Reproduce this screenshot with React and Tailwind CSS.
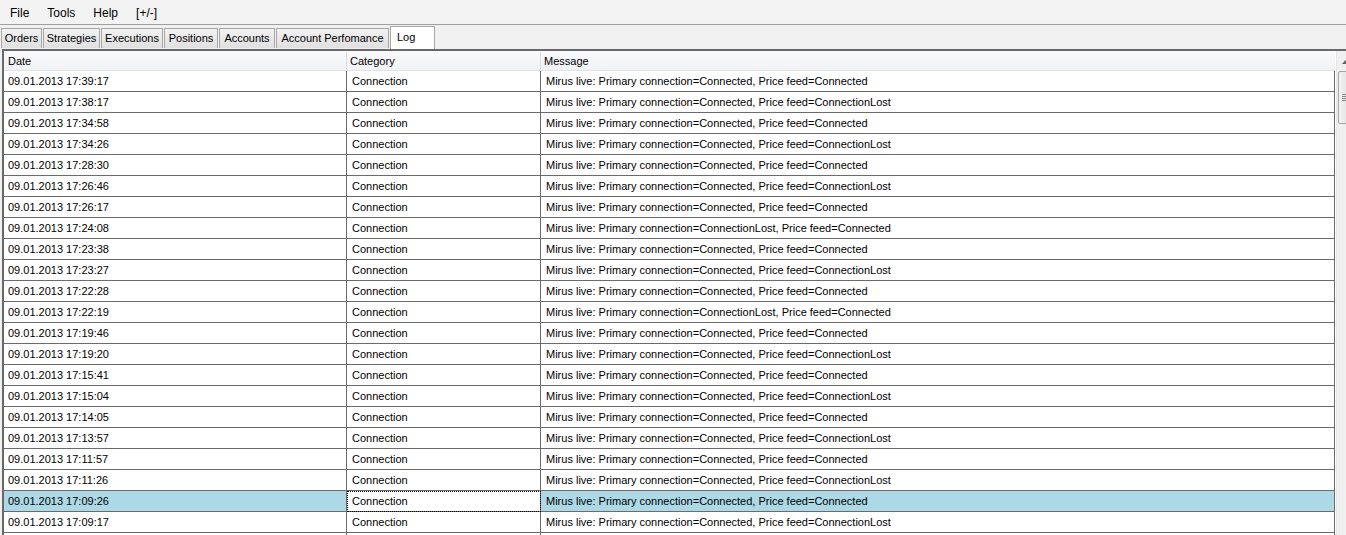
import React from "react";

const C = "Mirus live: Primary connection=Connected, Price feed=Connected";
const L = "Mirus live: Primary connection=Connected, Price feed=ConnectionLost";
const P = "Mirus live: Primary connection=ConnectionLost, Price feed=Connected";

const rows = [
  ["09.01.2013 17:39:17", C],
  ["09.01.2013 17:38:17", L],
  ["09.01.2013 17:34:58", C],
  ["09.01.2013 17:34:26", L],
  ["09.01.2013 17:28:30", C],
  ["09.01.2013 17:26:46", L],
  ["09.01.2013 17:26:17", C],
  ["09.01.2013 17:24:08", P],
  ["09.01.2013 17:23:38", C],
  ["09.01.2013 17:23:27", L],
  ["09.01.2013 17:22:28", C],
  ["09.01.2013 17:22:19", P],
  ["09.01.2013 17:19:46", C],
  ["09.01.2013 17:19:20", L],
  ["09.01.2013 17:15:41", C],
  ["09.01.2013 17:15:04", L],
  ["09.01.2013 17:14:05", C],
  ["09.01.2013 17:13:57", L],
  ["09.01.2013 17:11:57", C],
  ["09.01.2013 17:11:26", L],
  ["09.01.2013 17:09:26", C],
  ["09.01.2013 17:09:17", L],
  ["", ""],
];

const tabs = [
  ["Orders", "w-[41px]"],
  ["Strategies", "w-[57px]"],
  ["Executions", "w-[62px]"],
  ["Positions", "w-[54px]"],
  ["Accounts", "w-[56px]"],
  ["Account Perfomance", "w-[113px]"],
];

export default function App() {
  return (
    <div className="w-[1346px] h-[535px] overflow-hidden bg-[#f0f0f0] font-['Liberation_Sans',Arial,sans-serif] text-black">
      {/* Menu bar */}
      <div className="h-[25px] flex items-center pl-px pt-px text-[12px] bg-[#f3f3f3] border-b border-[#a0a0a0]">
        <span className="px-[9px]">File</span>
        <span className="px-[9px]">Tools</span>
        <span className="px-[9px]">Help</span>
        <span className="px-[9px]">[+/-]</span>
      </div>

      {/* Tab strip */}
      <div className="h-[24px] flex items-end pl-px gap-px text-[11px]">
        {tabs.map(([t, w]) => (
          <div
            key={t}
            className={`${w} h-[20px] mb-px flex items-center justify-center border border-[#a7a7a7] border-b-0 bg-gradient-to-b from-[#f2f2f2] to-[#e0e0e0] whitespace-nowrap`}
          >
            {t}
          </div>
        ))}
        <div className="w-[45px] h-[23px] flex items-center pl-[6px] pb-[2px] bg-white border border-[#a7a7a7] border-b-0">
          Log
        </div>
      </div>

      {/* Grid */}
      <div className="ml-[2px] border-t-2 border-l-2 border-[#696969] bg-white flex h-[486px] overflow-hidden text-[11px]">
        <div className="flex flex-col shrink-0">
          {/* Header */}
          <div className="flex h-[20px] shrink-0 pt-px bg-gradient-to-b from-[#f9fafb] to-[#f0f2f5] border-b border-[#e3e3e3]">
            <div className="w-[343px] pl-[4px] flex items-center border-r border-[#dcdcdc]">Date</div>
            <div className="w-[194px] pl-[3px] flex items-center border-r border-[#dcdcdc]">Category</div>
            <div className="w-[794px] pl-[3px] flex items-center">Message</div>
          </div>
          {/* Rows */}
          {rows.map(([d, m], i) => {
            const sel = i === 20;
            const empty = d === "";
            return (
              <div key={i} className="flex h-[21px] shrink-0">
                <div
                  className={`w-[343px] pl-[4px] flex items-center border-r border-b border-[#6b6b6b] ${sel ? "bg-[#add8e6]" : ""}`}
                >
                  {d}
                </div>
                <div
                  className={`w-[194px] pl-[5px] flex items-center border-r border-b border-[#6b6b6b] ${sel ? "outline outline-1 outline-dotted outline-black -outline-offset-1" : ""}`}
                >
                  {empty ? "" : "Connection"}
                </div>
                <div
                  className={`w-[794px] pl-[5px] flex items-center border-r border-b border-[#6b6b6b] ${sel ? "bg-[#add8e6]" : ""}`}
                >
                  {m}
                </div>
              </div>
            );
          })}
        </div>
        <div className="w-px shrink-0 bg-white" />
        {/* Scrollbar */}
        <div className="w-[17px] shrink-0 flex flex-col bg-[#f0f0f0] border-l border-[#e6e6e6]">
          <div className="h-[17px] flex items-center justify-center mt-[2px]">
            <svg width="7" height="4" viewBox="0 0 7 4">
              <path d="M0 4 L3.5 0 L7 4 Z" fill="#606060" />
            </svg>
          </div>
          <div className="mt-[1px] ml-px h-[53px] w-[15px] rounded-[2px] border border-[#a6a6a6] bg-gradient-to-r from-[#f3f3f3] to-[#dcdcdc] flex flex-col items-center justify-center gap-px">
            <div className="w-[8px] h-px bg-[#8a8a8a]" />
            <div className="w-[8px] h-px bg-[#8a8a8a]" />
            <div className="w-[8px] h-px bg-[#8a8a8a]" />
            <div className="w-[8px] h-px bg-[#8a8a8a]" />
          </div>
        </div>
      </div>
    </div>
  );
}
